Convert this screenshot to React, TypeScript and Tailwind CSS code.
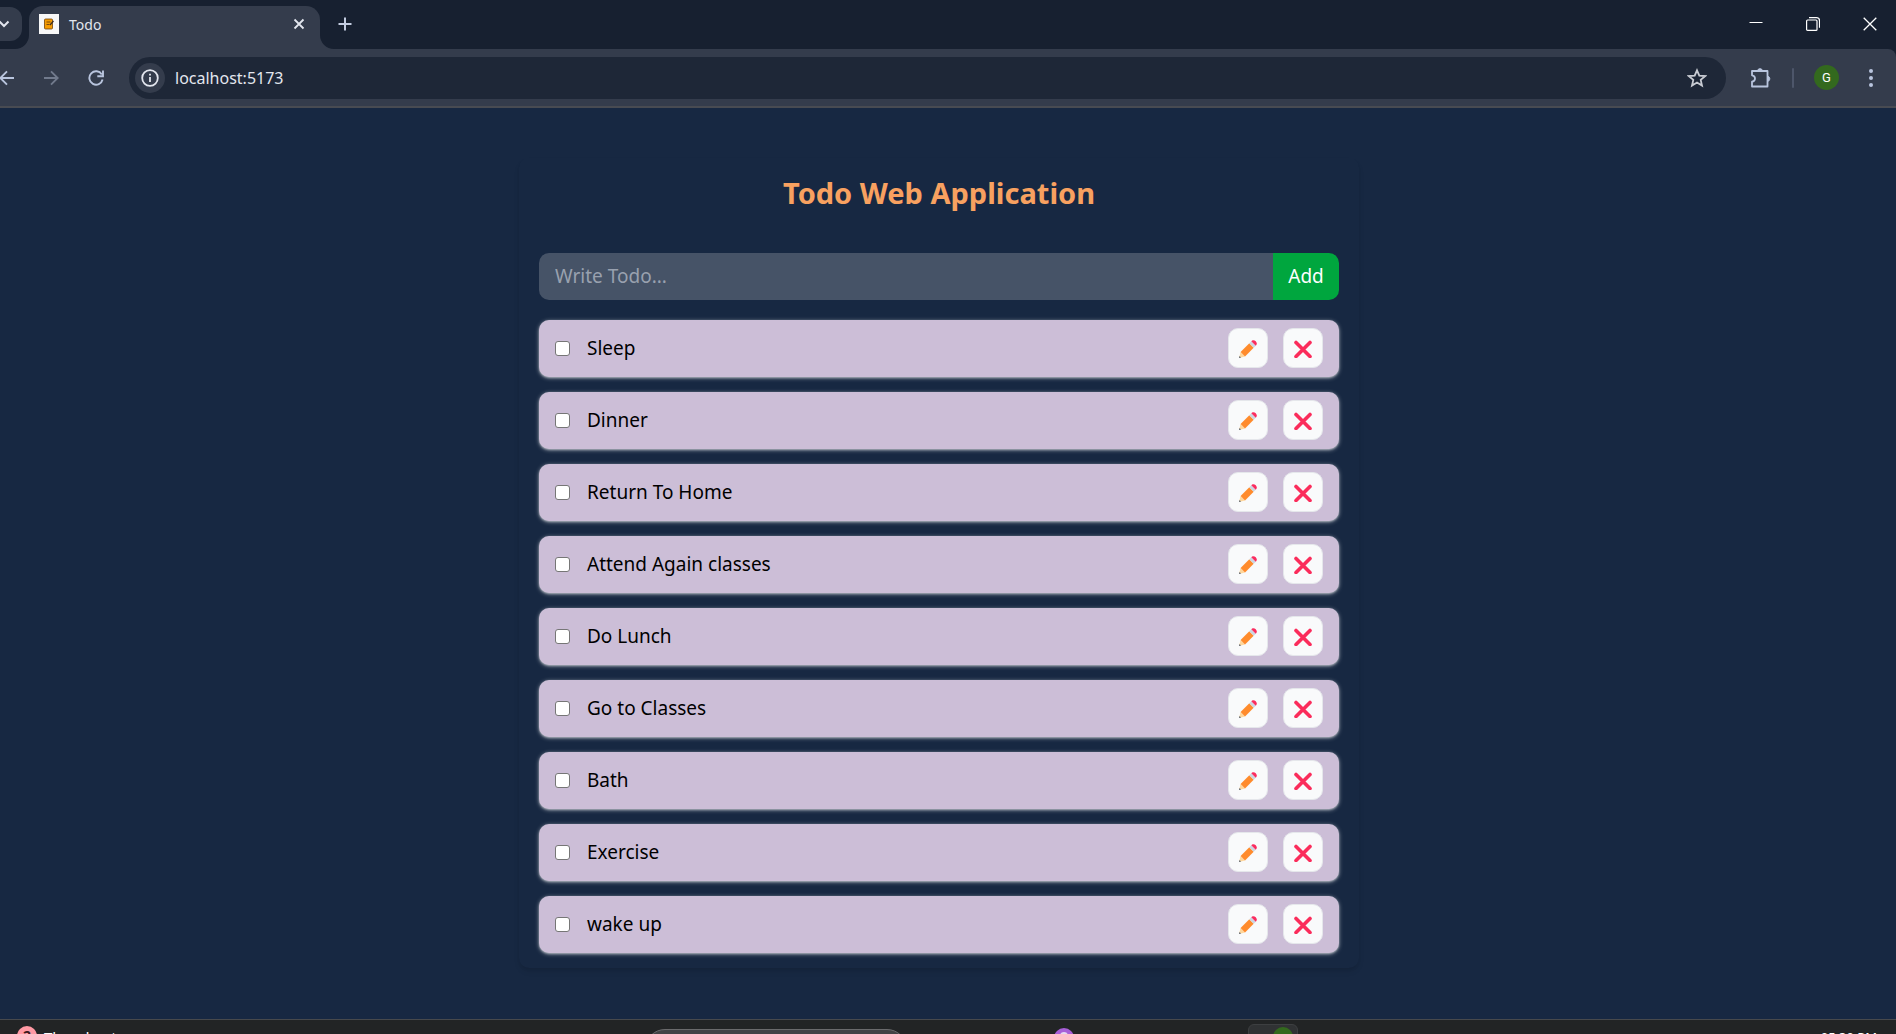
import { useState } from "react";

const initialTodos = [
  "Sleep",
  "Dinner",
  "Return To Home",
  "Attend Again classes",
  "Do Lunch",
  "Go to Classes",
  "Bath",
  "Exercise",
  "wake up",
];

function PencilIcon() {
  return (
    <svg viewBox="0 0 20 20" className="size-5" aria-hidden="true">
      <path d="M1 19l1.600-6 4.400 4.400z" fill="#ffd79c" />
      <path d="M1 19l.6-2 1.400 1.400z" fill="#45556c" />
      <path d="M2.600 13L11.300 4.300 15.700 8.700 7 17.400z" fill="#ff8b2c" />
      <path d="M11.300 4.300l2-2 4.400 4.400-2 2z" fill="#cad5e2" />
      <path d="M13.300 2.300l.6-.6c2.500-1.900 6.300 1.900 4.400 4.400l-.6.6z" fill="#fa2c5f" />
    </svg>
  );
}

function CrossIcon() {
  return (
    <svg viewBox="0 0 20 20" className="size-5" fill="none" stroke="#fb2c5b" strokeWidth="3.600" strokeLinecap="round" aria-hidden="true">
      <path d="M3 4.500l14 14M17 4.500l-14 14" />
    </svg>
  );
}

function TabStrip() {
  return (
    <div className="flex h-[49px] items-end bg-[#172030]">
      <button aria-label="Search tabs" className="mb-2 flex h-[34px] w-[22px] items-center rounded-r-xl bg-[#343c4c] text-[#e3e6ee]">
        <svg viewBox="0 0 12 12" className="-ml-[2px] size-3" fill="none" stroke="currentColor" strokeWidth="2"><path d="M1.500 3.500L6 8l4.500-4.500" /></svg>
      </button>
      <svg viewBox="0 0 14 14" className="-ml-[7px] size-[14px]" fill="#343c4c" aria-hidden="true"><path d="M14 0v14H0A14 14 0 0 0 14 0z" /></svg>
      <div className="flex h-[43px] w-[291px] items-center rounded-t-[14px] bg-[#343c4c] pr-3 pb-[7px] pl-[10px]">
        <svg viewBox="0 0 20 20" className="size-5" aria-hidden="true">
          <path d="M0 0h20v20H0z" fill="#f8f8f8" />
          <rect x="5.500" y="5" width="8" height="10" rx="1" fill="#f59b00" stroke="#70430a" strokeWidth=".8" />
          <path d="M7.500 8h4M7.500 10.500h3" stroke="#70430a" strokeWidth=".9" />
          <path d="M11 11l3.500-4" stroke="#3b2c20" strokeWidth="1.200" />
        </svg>
        <span className="ml-[10px] flex-1 text-[14px] text-[#e3e6ee]">Todo</span>
        <button aria-label="Close tab" className="flex size-[18px] items-center justify-center text-[#e3e6ee]">
          <svg viewBox="0 0 12 12" className="size-3" fill="none" stroke="currentColor" strokeWidth="1.800"><path d="M1.500 1.500l9 9M10.500 1.500l-9 9" /></svg>
        </button>
      </div>
      <svg viewBox="0 0 14 14" className="size-[14px]" fill="#343c4c" aria-hidden="true"><path d="M0 0v14h14A14 14 0 0 1 0 0z" /></svg>
      <button aria-label="New tab" className="mb-[18px] ml-1 text-[#c3cce0]">
        <svg viewBox="0 0 14 14" className="size-[14px]" fill="none" stroke="currentColor" strokeWidth="2"><path d="M7 .5v13M.5 7h13" /></svg>
      </button>
      <div className="mb-[18px] ml-auto flex items-center gap-[43px] pr-[19px] text-white">
        <button aria-label="Minimize"><svg viewBox="0 0 14 14" className="size-[14px]" stroke="currentColor"><path d="M.5 5.500h13" /></svg></button>
        <button aria-label="Restore"><svg viewBox="0 0 14 14" className="size-[14px]" fill="none" stroke="currentColor" strokeWidth="1.200"><rect x=".6" y="3" width="10.400" height="10.400" rx="1" /><path d="M3 .7h7.500a3 3 0 0 1 3 3v7" /></svg></button>
        <button aria-label="Close"><svg viewBox="0 0 14 14" className="size-[14px]" fill="none" stroke="currentColor" strokeWidth="1.300"><path d="M.7.7l12.600 12.600M13.300.7L.7 13.300" /></svg></button>
      </div>
    </div>
  );
}

function Toolbar() {
  return (
    <div className="bg-[#172030]">
      <div className="flex h-[59px] items-center rounded-tr-lg border-b-2 border-[#484b52] bg-[#343c4c] text-[#b9c5de]">
        <button aria-label="Back" className="-ml-[1px]">
          <svg viewBox="0 0 16 16" className="size-4" fill="none" stroke="currentColor" strokeWidth="1.900"><path d="M15 8H1.500M8 1.300L1.300 8 8 14.700" /></svg>
        </button>
        <button aria-label="Forward" disabled className="ml-[28px] text-[#717a8c]">
          <svg viewBox="0 0 16 16" className="size-4" fill="none" stroke="currentColor" strokeWidth="1.900"><path d="M1 8h13.500M8 1.300L14.700 8 8 14.700" /></svg>
        </button>
        <button aria-label="Reload" className="ml-[29px]">
          <svg viewBox="0 0 16 16" className="size-4" fill="none" stroke="currentColor" strokeWidth="1.900"><path d="M13.800 4.500A6.700 6.700 0 1 0 14.600 9.500M15 .5v5.700H9.300" /></svg>
        </button>
        <div className="ml-[25px] flex h-[42px] flex-1 items-center rounded-full bg-[#1e2737] pr-[19px] pl-1.5">
          <button aria-label="Site information" className="flex size-[30px] items-center justify-center rounded-full bg-[#343c4c] text-[#e3e6ee]">
            <svg viewBox="0 0 18 18" className="size-[18px]" fill="none" stroke="currentColor" strokeWidth="1.800"><circle cx="9" cy="9" r="7.800" /><path d="M9 8v5M9 4.800v1.800" /></svg>
          </button>
          <input aria-label="Address" defaultValue="localhost:5173" className="ml-[10px] min-w-0 flex-1 bg-transparent text-[16px] text-[#e3e6ee] outline-none" />
          <button aria-label="Bookmark" className="text-[#c9ccd3]">
            <svg viewBox="0 0 20 20" className="size-5" fill="none" stroke="currentColor" strokeWidth="1.800"><path d="M10 2.300l2.300 5.300 5.800.5-4.400 3.800 1.300 5.700-5-3-5 3 1.300-5.700L1.900 8.100l5.800-.5z" /></svg>
          </button>
        </div>
        <button aria-label="Extensions" className="ml-6">
          <svg viewBox="0 0 22 22" className="size-[22px]" fill="none" stroke="currentColor" strokeWidth="1.800" strokeLinejoin="round"><path d="M2 4h15.500v15.500H2v-4.800c4-.5 4-5.900 0-6.400z" /><path d="M7.500 3.500a2.600 2.600 0 0 1 5 0zM18 9.300a2.600 2.600 0 0 1 0 5z" fill="currentColor" strokeWidth=".8" /></svg>
        </button>
        <div className="ml-5 h-5 w-0.5 rounded bg-[#4d566a]" />
        <button aria-label="Profile" className="ml-5 flex size-[25px] items-center justify-center rounded-full bg-[#33691e] font-[Roboto] text-[13px] text-white">G</button>
        <button aria-label="Menu" className="mr-[23px] ml-[30px]">
          <svg viewBox="0 0 4 18" className="h-[18px] w-1" fill="currentColor"><circle cx="2" cy="2" r="2" /><circle cx="2" cy="9" r="2" /><circle cx="2" cy="16" r="2" /></svg>
        </button>
      </div>
    </div>
  );
}

function TodoRow({ label, onDelete }: { label: string; onDelete: () => void }) {
  return (
    <li className="flex items-start rounded-[10px] bg-[#ccbed7] px-4 pt-2 pb-[9px] shadow-[0_1px_4px_rgba(255,255,255,0.5),0_1px_2px_rgba(255,255,255,0.4)]">
      <label className="flex h-10 flex-1 items-center gap-[17px] text-[19px] text-black">
        <input type="checkbox" className="size-[15px] appearance-none rounded-[3px] border border-[#767676] bg-white checked:bg-blue-600" />
        {label}
      </label>
      <div className="flex gap-[15px]">
        <button aria-label={"Edit " + label} className="flex size-10 items-center justify-center rounded-[10px] border border-gray-200 bg-gray-50 pt-[2px]"><PencilIcon /></button>
        <button aria-label={"Delete " + label} onClick={onDelete} className="flex size-10 items-center justify-center rounded-[10px] border border-gray-200 bg-gray-50"><CrossIcon /></button>
      </div>
    </li>
  );
}

function Taskbar() {
  return (
    <footer className="flex h-[15px] items-start overflow-hidden border-t border-[#47494c] bg-[#222425] leading-5 text-white">
      <div className="flex w-[34%] shrink-0 pl-[17px]">
        <span className="mt-1.5 flex size-5 items-center justify-center rounded-full bg-[#ff99a4] text-[14px] font-bold text-[#3a1a1e]">2</span>
        <span className="mt-[7px] ml-[7px] text-[15px]">Thunderstorm</span>
      </div>
      <div className="mt-[9px] h-10 w-[262px] shrink-0 rounded-full border border-[#6a6a6c] bg-[#424345]" />
      <div className="mt-2 ml-[147px] flex size-[20px] shrink-0 items-start justify-center rounded-full bg-[#a85fd8] pt-1">
        <span className="size-2 rounded-full bg-[#e6d9f2]" />
      </div>
      <div className="mt-1 ml-[174px] flex h-[50px] w-[50px] shrink-0 justify-end rounded-md border border-[#3d3f41] bg-[#303234] pt-[2px] pr-1">
        <span className="flex size-5 justify-center rounded-full bg-[#33691e] pt-1 text-[10px]">G</span>
      </div>
      <time className="mt-[7px] ml-auto pr-[19px] text-[13px]">05:30 PM</time>
    </footer>
  );
}

export default function App() {
  const [todos, setTodos] = useState(initialTodos);
  const [draft, setDraft] = useState("");
  return (
    <div className="flex h-screen flex-col overflow-hidden bg-[#172842] font-['Noto_Sans',sans-serif]">
      <header>
        <TabStrip />
        <Toolbar />
      </header>
      <main className="min-h-0 flex-1 pt-[50px] pr-[38px] pl-5">
        <section className="mx-auto max-w-[840px] rounded-[10px] px-5 py-[15px] shadow-md">
          <h1 className="mb-[40px] text-center text-[29px] leading-[40px] font-bold text-[#f8a160]">Todo Web Application</h1>
          <form
            className="flex h-[47px] text-[19px]"
            onSubmit={(e) => {
              e.preventDefault();
              if (draft.trim()) setTodos([draft.trim(), ...todos]);
              setDraft("");
            }}
          >
            <input aria-label="New todo" placeholder="Write Todo..." value={draft} onChange={(e) => setDraft(e.target.value)} className="min-w-0 flex-1 rounded-l-[10px] bg-[#465367] px-4 text-white outline-none placeholder:text-[#99a1af]" />
            <button className="w-[66px] rounded-r-[10px] bg-[#00a63e] text-white">Add</button>
          </form>
          <ul className="mt-5 flex flex-col gap-[15px]">
            {todos.map((t, i) => (
              <TodoRow key={t + i} label={t} onDelete={() => setTodos(todos.filter((_, j) => j !== i))} />
            ))}
          </ul>
        </section>
      </main>
      <Taskbar />
    </div>
  );
}
